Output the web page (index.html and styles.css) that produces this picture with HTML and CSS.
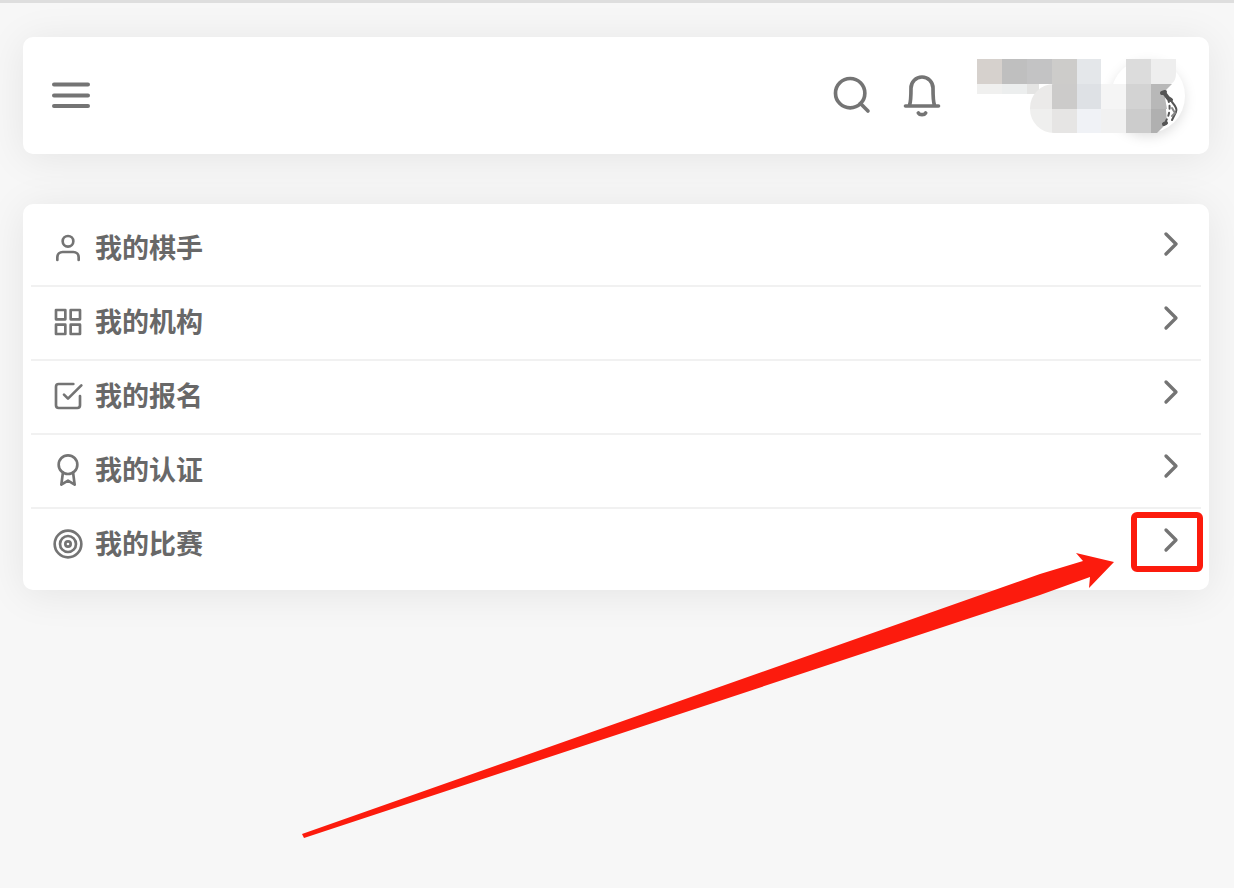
FILE: index.html
```html
<!DOCTYPE html>
<html lang="zh-CN">
<head>
    <meta charset="UTF-8">
    <meta name="viewport" content="width=device-width, initial-scale=1.0">
    <title>个人中心</title>
    <link rel="stylesheet" href="styles.css">
</head>
<body>
    <header class="navbar">
        <button class="icon-button" type="button" aria-label="菜单">
            <svg class="menu-icon" viewBox="0 0 38 28">
                <path d="M2 3.500H36M2 14.500H36M2 25H36"/>
            </svg>
        </button>
        <div class="navbar-right">
            <button class="icon-button" type="button" aria-label="搜索">
                <svg class="nav-icon" viewBox="0 0 24 24">
                    <circle cx="11" cy="11" r="8"/>
                    <path d="M20.700 20.700l-4.050-4.050"/>
                </svg>
            </button>
            <button class="icon-button" type="button" aria-label="通知">
                <svg class="nav-icon" viewBox="0 0 24 24">
                    <path d="M3 18h18M5.200 17.500C6 15.500 6 13 6 8.200a6 6 0 0 1 12 0c0 4.800 0 7.300.8 9.300"/>
                    <path d="M10 21.800a2.200 1.600 0 0 0 4 0"/>
                </svg>
            </button>
            <button class="icon-button user-button" type="button" aria-label="用户">
                <svg class="user-picture" viewBox="0 0 212 80">
                    <defs>
                        <clipPath id="pill"><rect x="54" y="28" width="170" height="49" rx="24"/></clipPath>
                    </defs>
                    <circle class="avatar" cx="172" cy="40" r="37"/>
                    <g>
                        <rect x="1" y="3" width="25" height="25" fill="#d6d1cd"/>
                        <rect x="26" y="3" width="25" height="25" fill="#bfbfbf"/>
                        <rect x="51" y="3" width="25" height="25" fill="#c3c3c4"/>
                        <rect x="76" y="3" width="25" height="25" fill="#cdccca"/>
                        <rect x="101" y="3" width="24" height="25" fill="#e4e7ea"/>
                        <rect x="150" y="3" width="25" height="25" fill="#dcdcdc"/>
                        <path d="M175 3h25v15q0 7-5 10h-20z" fill="#eee"/>
                        <rect x="1" y="28" width="25" height="10" fill="#f0f0ef"/>
                        <rect x="26" y="28" width="25" height="10" fill="#eceeee"/>
                        <rect x="51" y="28" width="12" height="10" fill="#e4e4e3"/>
                    </g>
                    <g clip-path="url(#pill)">
                        <rect x="51" y="28" width="25" height="25" fill="#ebeae9"/>
                        <rect x="76" y="28" width="25" height="25" fill="#cccbca"/>
                        <rect x="101" y="28" width="24" height="25" fill="#dee1e5"/>
                        <rect x="125" y="28" width="25" height="25" fill="#f5f5f5"/>
                        <rect x="150" y="28" width="25" height="25" fill="#d3d3d3"/>
                        <rect x="51" y="53" width="25" height="24" fill="#efefee"/>
                        <rect x="76" y="53" width="25" height="24" fill="#e6e5e4"/>
                        <rect x="101" y="53" width="24" height="24" fill="#f0f2f6"/>
                        <rect x="125" y="53" width="25" height="24" fill="#f1f1f1"/>
                        <rect x="150" y="53" width="25" height="24" fill="#ccc"/>
                        <path d="M175 28h21l-8 8 3 17h-16z" fill="#b8b8b8"/>
                        <path d="M175 53h15l1 14-10 10h-6z" fill="#b0b0b0"/>
                    </g>
                    <g fill="none" stroke="#555" stroke-width="2">
                        <path d="M186 37l3-1M189 38l3 4 3 2M188 68l2-1" stroke-width="4"/>
                        <path d="M196 46q6 7 4 10l-4 8"/>
                        <path d="M192 43q4 11-2 22" stroke-dasharray="3 4"/>
                        <path d="M196 52l3 5-3 3" stroke="#888"/>
                    </g>
                </svg>
            </button>
        </div>
    </header>

    <main>
        <ul class="menu">
            <li class="menu-item">
                <a class="menu-link" href="#players">
                    <svg class="item-icon" viewBox="0 0 24 24">
                        <path d="M20 21v-2a4 4 0 0 0-4-4H8a4 4 0 0 0-4 4v2"/>
                        <circle cx="12" cy="7" r="4"/>
                    </svg>
                    <span class="item-text">我的棋手</span>
                    <svg class="chevron" viewBox="0 0 24 24"><path d="M9 18l6-6-6-6"/></svg>
                </a>
            </li>
            <li class="menu-item">
                <a class="menu-link" href="#organizations">
                    <svg class="item-icon" viewBox="0 0 24 24">
                        <path d="M3 3h7v7H3zM14 3h7v7h-7zM14 14h7v7h-7zM3 14h7v7H3z"/>
                    </svg>
                    <span class="item-text">我的机构</span>
                    <svg class="chevron" viewBox="0 0 24 24"><path d="M9 18l6-6-6-6"/></svg>
                </a>
            </li>
            <li class="menu-item">
                <a class="menu-link" href="#signups">
                    <svg class="item-icon" viewBox="0 0 24 24">
                        <path d="M9 11l3 3L22 4"/>
                        <path d="M21 12v7a2 2 0 0 1-2 2H5a2 2 0 0 1-2-2V5a2 2 0 0 1 2-2h11"/>
                    </svg>
                    <span class="item-text">我的报名</span>
                    <svg class="chevron" viewBox="0 0 24 24"><path d="M9 18l6-6-6-6"/></svg>
                </a>
            </li>
            <li class="menu-item">
                <a class="menu-link" href="#certificates">
                    <svg class="item-icon" viewBox="0 0 24 24">
                        <circle cx="12" cy="8" r="7"/>
                        <path d="M8.200 13.900L7 23l5-3 5 3-1.200-9.100"/>
                    </svg>
                    <span class="item-text">我的认证</span>
                    <svg class="chevron" viewBox="0 0 24 24"><path d="M9 18l6-6-6-6"/></svg>
                </a>
            </li>
            <li class="menu-item">
                <a class="menu-link" href="#matches">
                    <svg class="item-icon" viewBox="0 0 24 24">
                        <circle cx="12" cy="12" r="10"/>
                        <circle cx="12" cy="12" r="6"/>
                        <circle cx="12" cy="12" r="2"/>
                    </svg>
                    <span class="item-text">我的比赛</span>
                    <svg class="chevron" viewBox="0 0 24 24"><path d="M9 18l6-6-6-6"/></svg>
                </a>
                <span class="marker"></span>
                <svg class="arrow" viewBox="0 0 812 288">
                    <path d="M0 282L738 22l43-13-7-8 38 9-25 26 1-11-50 18L2 286z"/>
                </svg>
            </li>
        </ul>
    </main>
</body>
</html>
```
FILE: styles.css
```css
* {
    box-sizing: border-box;
}
body {
    margin: 0;
    padding: 34px 25px 40px 23px;
    min-height: 100vh;
    border-top: 3px solid #dedede;
    background-color: #f7f7f7;
    font-family: "Noto Sans CJK SC", "Liberation Sans", sans-serif;
    color: #686868;
}
svg {
    display: block;
    fill: none;
    stroke: #747474;
    stroke-width: 2;
    stroke-linecap: round;
    stroke-linejoin: round;
}
.navbar,
.menu {
    background-color: #fff;
    border-radius: 10px;
    box-shadow: 0 4px 40px rgba(0, 0, 0, 0.08);
}
.navbar {
    display: flex;
    align-items: center;
    justify-content: space-between;
    height: 117px;
    padding: 0 21px 2px 29px;
    margin-bottom: 50px;
}
.navbar-right {
    display: flex;
    align-items: center;
    gap: 26px;
}
.icon-button {
    padding: 0;
    border: none;
    background: none;
    cursor: pointer;
}
.menu-icon {
    width: 38px;
    height: 28px;
    stroke-width: 4;
}
.nav-icon {
    width: 44px;
    height: 44px;
}
.user-button {
    margin-left: 6px;
    padding-top: 2px;
}
.user-picture {
    width: 212px;
    height: 80px;
    overflow: visible;
    stroke: none;
}
.avatar {
    fill: #fff;
    filter: drop-shadow(0 4px 6px rgba(0, 0, 0, 0.12));
}
.menu {
    list-style: none;
    margin: 0;
    padding: 9px 8px;
}
.menu-item {
    position: relative;
    border-bottom: 2px solid #f1f1f1;
}
.menu-item:last-child {
    border-bottom: none;
}
.menu-link {
    display: flex;
    align-items: center;
    height: 72px;
    padding: 0 10px 4px 21px;
    color: inherit;
    text-decoration: none;
}
.item-icon {
    width: 32px;
    height: 32px;
    margin-top: 2px;
    margin-right: 11px;
}
.item-text {
    flex: 1;
    font-size: 27px;
    font-weight: 700;
    line-height: 40px;
}
.chevron {
    width: 40px;
    height: 40px;
    margin-bottom: 6px;
}

/* red callout on the last row */
.marker {
    position: absolute;
    top: 3px;
    right: -2px;
    width: 72px;
    height: 60px;
    border: 6px solid #fc1b0d;
    border-radius: 6px;
    pointer-events: none;
}
.arrow {
    position: absolute;
    top: 43px;
    right: 87px;
    width: 812px;
    height: 288px;
    fill: #fc1b0d;
    stroke: none;
    pointer-events: none;
}
```
